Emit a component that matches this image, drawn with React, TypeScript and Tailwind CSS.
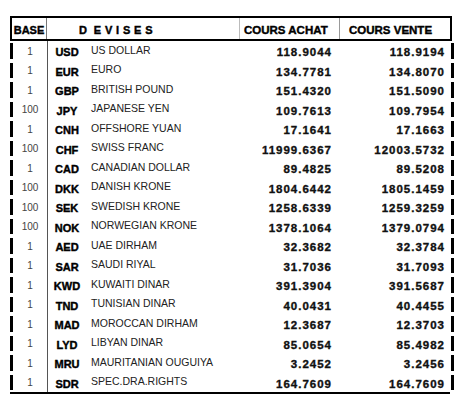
import React from 'react';

type Rate = {
  base: string;
  code: string;
  name: string;
  achat: string;
  vente: string;
};

const rates: Rate[] = [
  { base: '1', code: 'USD', name: 'US DOLLAR', achat: '118.9044', vente: '118.9194' },
  { base: '1', code: 'EUR', name: 'EURO', achat: '134.7781', vente: '134.8070' },
  { base: '1', code: 'GBP', name: 'BRITISH POUND', achat: '151.4320', vente: '151.5090' },
  { base: '100', code: 'JPY', name: 'JAPANESE YEN', achat: '109.7613', vente: '109.7954' },
  { base: '1', code: 'CNH', name: 'OFFSHORE YUAN', achat: '17.1641', vente: '17.1663' },
  { base: '100', code: 'CHF', name: 'SWISS FRANC', achat: '11999.6367', vente: '12003.5732' },
  { base: '1', code: 'CAD', name: 'CANADIAN DOLLAR', achat: '89.4825', vente: '89.5208' },
  { base: '100', code: 'DKK', name: 'DANISH KRONE', achat: '1804.6442', vente: '1805.1459' },
  { base: '100', code: 'SEK', name: 'SWEDISH KRONE', achat: '1258.6339', vente: '1259.3259' },
  { base: '100', code: 'NOK', name: 'NORWEGIAN KRONE', achat: '1378.1064', vente: '1379.0794' },
  { base: '1', code: 'AED', name: 'UAE DIRHAM', achat: '32.3682', vente: '32.3784' },
  { base: '1', code: 'SAR', name: 'SAUDI RIYAL', achat: '31.7036', vente: '31.7093' },
  { base: '1', code: 'KWD', name: 'KUWAITI DINAR', achat: '391.3904', vente: '391.5687' },
  { base: '1', code: 'TND', name: 'TUNISIAN DINAR', achat: '40.0431', vente: '40.4455' },
  { base: '1', code: 'MAD', name: 'MOROCCAN DIRHAM', achat: '12.3687', vente: '12.3703' },
  { base: '1', code: 'LYD', name: 'LIBYAN DINAR', achat: '85.0654', vente: '85.4982' },
  { base: '1', code: 'MRU', name: 'MAURITANIAN OUGUIYA', achat: '3.2452', vente: '3.2456' },
  { base: '1', code: 'SDR', name: 'SPEC.DRA.RIGHTS', achat: '164.7609', vente: '164.7609' },
];

const RateRow: React.FC<{ rate: Rate }> = ({ rate }) => (
  <div className="flex h-[19.5px]">
    <div className="w-[3px] py-[2px]">
      <div className="h-full bg-black" />
    </div>
    <div className="w-[35px] border-r border-[#555] flex items-center justify-center text-[10px] text-[#444] pt-[1px]">
      {rate.base}
    </div>
    <div className="w-[38px] flex items-center justify-center text-[11px] font-bold text-black pt-[3px] [-webkit-text-stroke:0.4px_black]">
      {rate.code}
    </div>
    <div className="w-[155px] flex items-center pl-[5px] text-[10.5px] text-[#222]">
      {rate.name}
    </div>
    <div className="w-[91px] flex items-center justify-end text-[11.5px] font-bold tracking-[1px] text-[#111] pt-[4px] [-webkit-text-stroke:0.35px_#111]">
      {rate.achat}
    </div>
    <div className="w-[113px] flex items-center justify-end text-[11.5px] font-bold tracking-[1px] text-[#111] pt-[4px] [-webkit-text-stroke:0.35px_#111]">
      {rate.vente}
    </div>
    <div className="w-[6px]" />
    <div className="w-[3px] py-[2px]">
      <div className="h-full bg-black" />
    </div>
  </div>
);

export default function App() {
  return (
    <div
      className="w-[458px] h-[402px] bg-white overflow-hidden"
      style={{ fontFamily: '"Liberation Sans", Arial, sans-serif' }}
    >
      <div className="ml-[10px] pt-[16px] w-[444px]">
        {/* header */}
        <div className="flex w-[442px] h-[25px] border-2 border-black font-bold text-black [-webkit-text-stroke:0.4px_black]">
          <div className="w-[35px] border-r border-[#777] flex items-center justify-center text-[11px] pt-[4px]">
            BASE
          </div>
          <div className="w-[193px] border-r border-[#bbb] flex items-center pl-[32px] text-[11px] pt-[4px]">
            <span className="tracking-[3.8px]">D</span>
            <span className="ml-[3px] tracking-[3.8px]">EVISES</span>
          </div>
          <div className="w-[100px] border-r border-[#999] flex items-center pl-[4px] text-[11.5px] pt-[4px]">
            COURS ACHAT
          </div>
          <div className="flex-1 flex items-center pl-[9px] text-[11.5px] pt-[4px]">
            COURS VENTE
          </div>
        </div>

        {/* rows */}
        <div className="flex flex-col">
          {rates.map((r) => (
            <RateRow key={r.code} rate={r} />
          ))}
        </div>

        <div className="w-[440px] h-[2px] bg-black" />
      </div>
    </div>
  );
}
